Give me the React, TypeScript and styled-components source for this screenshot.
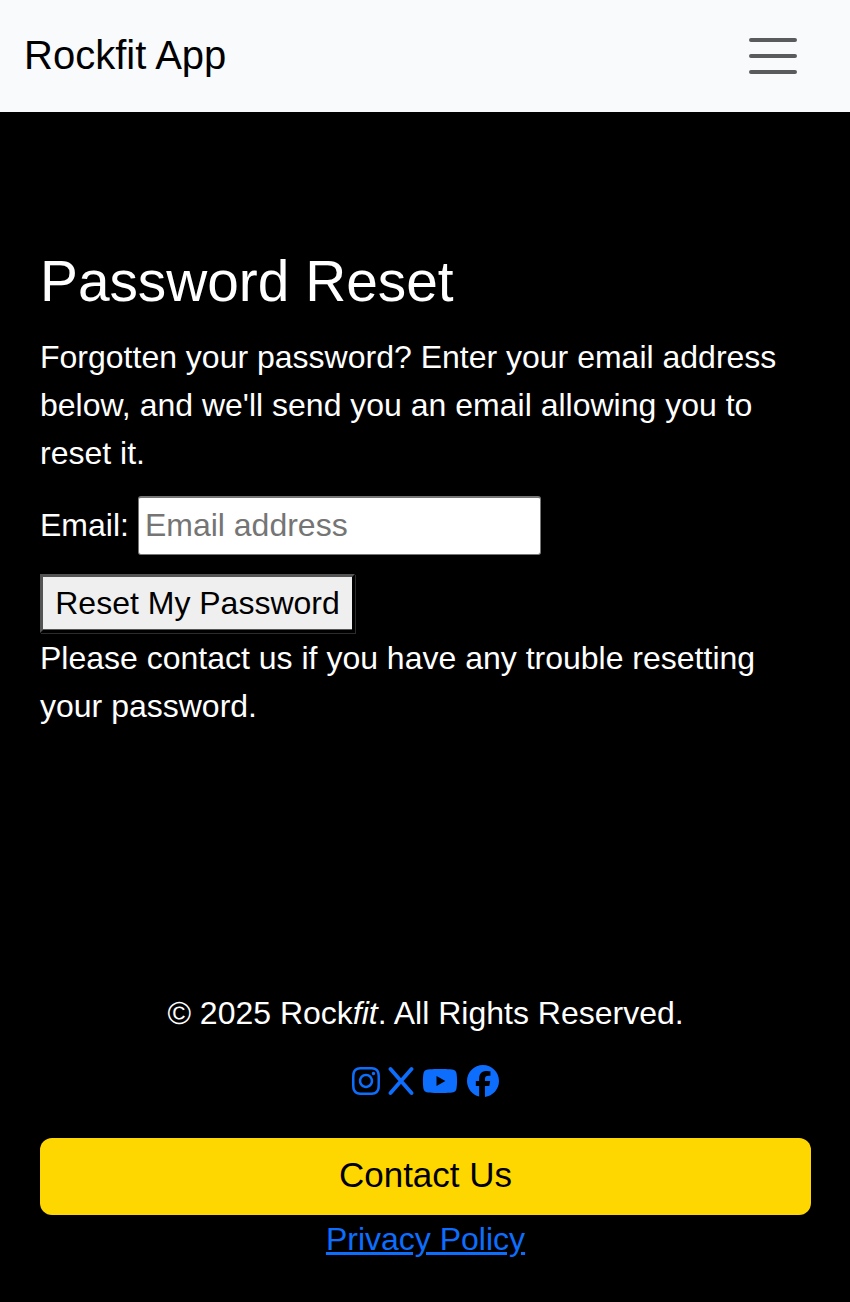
import React from 'react';
import styled, { createGlobalStyle } from 'styled-components';
import { FaInstagram, FaYoutube, FaFacebook } from 'react-icons/fa6';

const GlobalStyle = createGlobalStyle`
  *, *::before, *::after { box-sizing: border-box; }
  body {
    margin: 0;
    background: #000;
    color: #fff;
    font-family: "Liberation Sans", Arial, sans-serif;
    font-size: 32px;
    line-height: 48px;
  }
`;

const Page = styled.div`
  display: flex;
  flex-direction: column;
  min-height: 1302px;
`;

const Navbar = styled.nav`
  display: flex;
  align-items: center;
  justify-content: space-between;
  height: 112px;
  padding: 0 23px 0 24px;
  background: #f8fafc;
`;

const Brand = styled.a`
  padding-bottom: 2px;
  color: #000;
  font-size: 40px;
  line-height: 60px;
  text-decoration: none;
`;

const Toggler = styled.button`
  display: flex;
  padding: 0 24px;
  border: 0;
  background: transparent;
`;

const Main = styled.main`
  flex: 1;
  padding: 135px 40px 0;
`;

const Title = styled.h1`
  margin: 0 0 17px;
  font-size: 56.8px;
  font-weight: 400;
  line-height: 69px;
`;

const Text = styled.p`
  margin: 0;
`;

const Field = styled.p`
  display: flex;
  align-items: center;
  gap: 9px;
  margin: 19px 0;
`;

const Label = styled.label`
  padding-bottom: 2px;
`;

const Input = styled.input`
  width: 403px;
  height: 59px;
  padding: 1px 6px 3px;
  border: 1px solid #767676;
  border-top-width: 2px;
  border-radius: 3px;
  background: #fff;
  font: inherit;

  &::placeholder { color: #757575; }
`;

const SubmitButton = styled.button`
  display: block;
  width: 315px;
  height: 59px;
  margin-bottom: 1px;
  padding: 0 0 1px;
  border: 3px outset #000;
  background: #efefef;
  color: #000;
  font: inherit;
  box-shadow: inset 0 -1px #555, 1px 1px #2c2c2c;
`;

const Footer = styled.footer`
  display: flex;
  flex-direction: column;
  align-items: center;
  padding: 0 39px 39px 40px;
`;

const Social = styled.div`
  display: flex;
  align-items: center;
  height: 48px;
  margin: 20px 2px 32.6px 0;
  color: #0d6efd;
`;

const SocialLink = styled.a<{ $gap?: number }>`
  display: flex;
  margin-left: ${({ $gap = 0 }) => $gap}px;
  color: inherit;
`;

const ContactButton = styled.button`
  width: 100%;
  height: 77px;
  margin-bottom: 0.4px;
  padding: 0 0 3px;
  border: 0;
  border-radius: 12px;
  background: #ffd700;
  color: #000;
  font: inherit;
  font-size: 35px;
`;

const PolicyLink = styled.a`
  color: #0d6efd;
`;

export default function App() {
  return (
    <Page>
      <GlobalStyle />
      <Navbar>
        <Brand>Rockfit App</Brand>
        <Toggler aria-label="Toggle navigation">
          <svg width="60" height="60" viewBox="0 0 30 30">
            <path stroke="#5a5b5c" strokeLinecap="round" strokeMiterlimit="10" strokeWidth="2" d="M4 7h22M4 15h22M4 23h22" />
          </svg>
        </Toggler>
      </Navbar>
      <Main>
        <Title>Password Reset</Title>
        <Text>
          Forgotten your password? Enter your email address below, and we'll send you an email allowing you to reset it.
        </Text>
        <Field>
          <Label htmlFor="email">Email:</Label>
          <Input id="email" type="email" placeholder="Email address" />
        </Field>
        <SubmitButton>Reset My Password</SubmitButton>
        <Text>Please contact us if you have any trouble resetting your password.</Text>
      </Main>
      <Footer>
        <Text>
          © 2025 Rock<em>fit</em>. All Rights Reserved.
        </Text>
        <Social>
          <SocialLink aria-label="Instagram"><FaInstagram size={32} /></SocialLink>
          <SocialLink aria-label="X" $gap={6}>
            <svg width="26" height="30" viewBox="0 0 26 30" fill="none" stroke="currentColor" strokeWidth="3.8" strokeLinecap="round">
              <path d="M2.5 3l21 24M23.5 3l-21 24" />
            </svg>
          </SocialLink>
          <SocialLink aria-label="YouTube" $gap={8}><FaYoutube size={36} /></SocialLink>
          <SocialLink aria-label="Facebook" $gap={9}><FaFacebook size={32} /></SocialLink>
        </Social>
        <ContactButton>Contact Us</ContactButton>
        <PolicyLink href="#privacy">Privacy Policy</PolicyLink>
      </Footer>
    </Page>
  );
}
